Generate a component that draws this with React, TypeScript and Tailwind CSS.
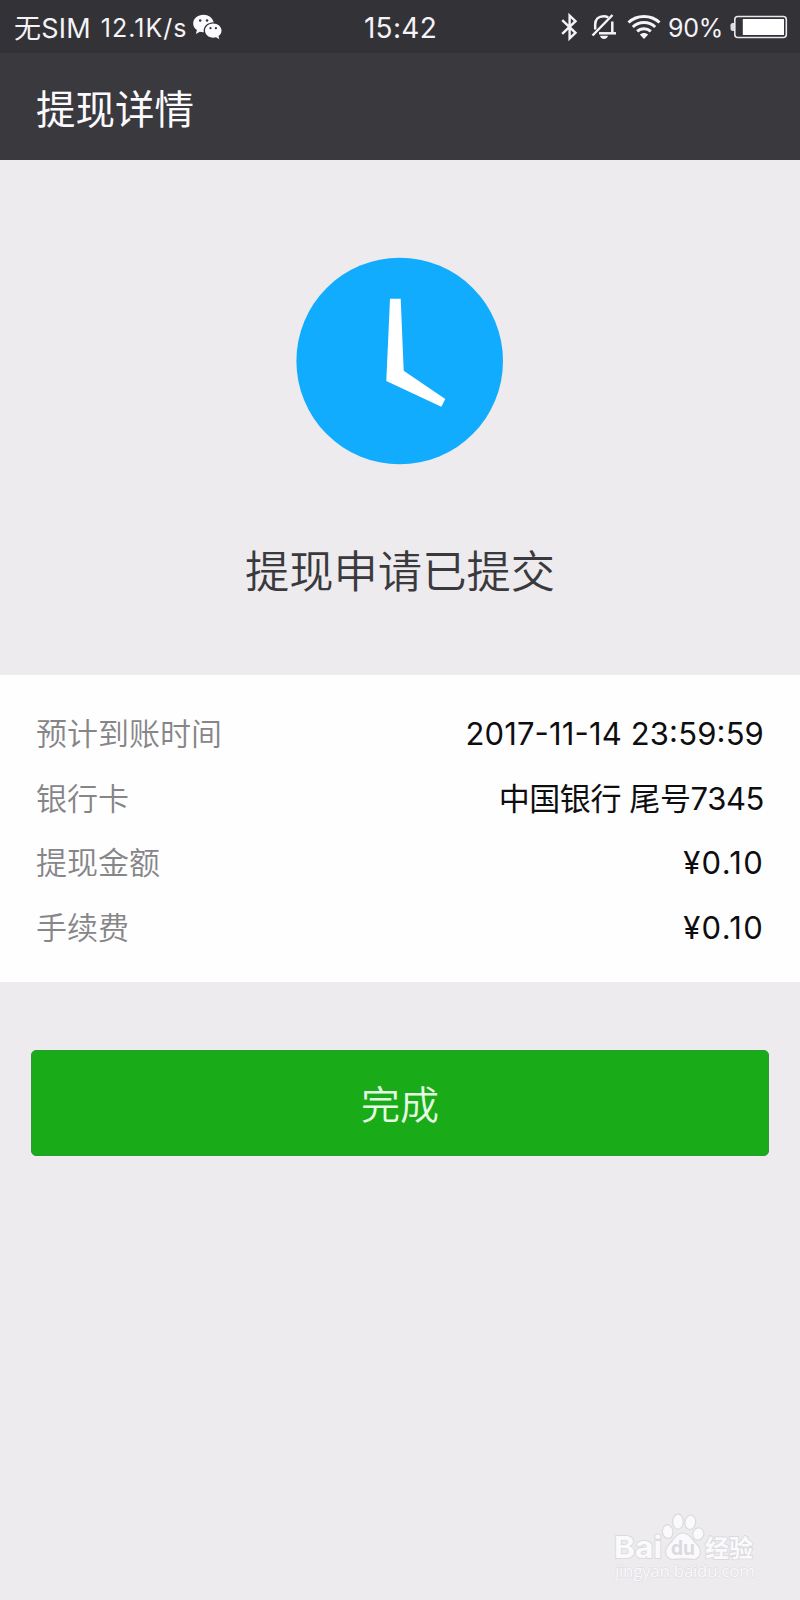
const details = [
  { label: '预计到账时间', value: '2017-11-14 23:59:59', spacing: 'tracking-[0.15px]' },
  { label: '银行卡', value: '中国银行 尾号7345', spacing: 'tracking-[-0.4px]' },
  { label: '提现金额', value: '¥0.10', spacing: 'tracking-[1.3px]' },
  { label: '手续费', value: '¥0.10', spacing: 'tracking-[1.3px]' },
]

function WechatIcon() {
  return (
    <svg className="-mt-[3px]" width="29" height="26" viewBox="0 0 29 26">
      <path
        fill="#fbfaff"
        d="M10.500 0.800C4.700 0.800 0.200 4.600 0.200 9.400c0 2.800 1.400 5 3.700 6.700l-1 3.900 4-2.200c1.200.3 2.400.5 3.900.4-.9-5.200 3-9.700 9.900-9.900C19.600 3.900 15.500 0.800 10.500 0.800z"
      />
      <path
        fill="#fbfaff"
        d="M20.200 9.500c-4.700 0-8.200 3.200-8.200 7.100 0 4 3.500 7.100 8.200 7.100 1 0 2-.1 2.900-.4l3.200 1.900-.8-3.100c1.900-1.300 3-3.200 3-5.500 0-3.900-3.600-7.100-8.300-7.100z"
      />
      <g fill="#333237">
        <circle cx="7.200" cy="6.600" r="1.250" />
        <circle cx="14" cy="6.600" r="1.250" />
        <circle cx="17.500" cy="14.200" r="1.100" />
        <circle cx="22.900" cy="14.200" r="1.100" />
      </g>
    </svg>
  )
}

function BluetoothIcon() {
  return (
    <svg className="-mt-[3px]" width="17" height="30" viewBox="0 0 17 30" fill="none" stroke="#f4f3f8" strokeWidth="2.400">
      <path d="M1.200 8.200L14.500 20.800 8.600 26.400V3.600L14.500 9.200 1.200 21.800" />
    </svg>
  )
}

function BellOffIcon() {
  return (
    <svg className="-mt-[3px]" width="26" height="26" viewBox="0 0 26 26" fill="none" stroke="#f4f3f8" strokeWidth="2.500">
      <path d="M4.200 15.500V10.500C4.200 5.500 7.500 2.200 12.500 2.200c1.800 0 3.400.4 4.700 1.200" />
      <path d="M21.300 7.500V19" />
      <path d="M8 19.300H25" />
      <path d="M21.500 1L1.500 21.500" />
      <path fill="#f4f3f8" stroke="none" d="M9 21.800h8c-.4 2-1.900 3.200-4 3.200S9.400 23.800 9 21.800z" />
    </svg>
  )
}

function WifiIcon() {
  return (
    <svg className="-mt-[3px]" width="34" height="26" viewBox="0 0 34 26" fill="none" stroke="#f4f3f8" strokeWidth="3">
      <path d="M1.500 8.500C10 0.500 24 0.500 32.500 8.500" />
      <path d="M5.800 13c6.200-6 16.200-6 22.400 0" />
      <path d="M10.200 17.400c3.800-3.600 9.800-3.600 13.600 0" />
      <path fill="#f4f3f8" stroke="none" d="M12.800 20.600c2.400-2.100 6-2.100 8.400 0L17 25z" />
    </svg>
  )
}

function BatteryIcon() {
  return (
    <svg className="-mt-[3px]" width="58" height="24" viewBox="0 0 58 24">
      <path fill="#dddce2" d="M4 8v8H2.500C1.300 16 .5 15 .5 13.800v-3.600C.5 9 1.300 8 2.500 8z" />
      <rect x="4.800" y="1.500" width="51.500" height="21" rx="3" fill="none" stroke="#e9e8ed" strokeWidth="1.600" />
      <rect x="12.800" y="4" width="41.200" height="16" rx="0.500" fill="#ffffff" />
    </svg>
  )
}

function StatusBar() {
  return (
    <div className="grid h-[53px] grid-cols-[1fr_auto_1fr] items-center bg-[#333237] text-[#f4f3f8]">
      <div className="flex items-center pl-[14px]">
        <span className="text-[27px] leading-[55px] tracking-[0.200px]">无SIM</span>
        <span className="ml-[10px] text-[25px] leading-[55px] tracking-[1px]">12.1K/s</span>
        <span className="ml-[6px]">
          <WechatIcon />
        </span>
      </div>
      <span className="pl-[1px] text-[28px] leading-[57px] tracking-[0.300px]">15:42</span>
      <div className="flex items-center justify-end pr-[12px]">
        <BluetoothIcon />
        <span className="ml-[13px]">
          <BellOffIcon />
        </span>
        <span className="ml-[10px]">
          <WifiIcon />
        </span>
        <span className="ml-[7px] text-[25px] leading-[55px] tracking-[-0.300px]">90%</span>
        <span className="ml-[7px]">
          <BatteryIcon />
        </span>
      </div>
    </div>
  )
}

function Watermark() {
  return (
    <div className="absolute right-[34px] bottom-[14px] h-[75px] w-[155px]">
      <svg width="155" height="75" viewBox="0 0 155 75" className="overflow-visible">
        <g fill="#faf9fb" stroke="#dbdade" strokeWidth="1.200">
          <ellipse cx="56.700" cy="20.700" rx="5.300" ry="6.800" transform="rotate(-8 56.700 20.700)" />
          <ellipse cx="67" cy="10.700" rx="5.300" ry="7.500" />
          <ellipse cx="79.300" cy="11.300" rx="5.300" ry="7.300" transform="rotate(8 79.300 11.300)" />
          <ellipse cx="87.300" cy="23" rx="5.500" ry="6.200" transform="rotate(15 87.300 23)" />
          <path d="M72 22c-5 0-8 4-10.500 7.500C58.500 33 54.500 36 54.500 41c0 4.500 3.500 7.500 7.500 7.500 3.500 0 6.500-.7 10-.7s6.500.7 10 .7c4 0 7.500-3 7.500-7.500 0-5-4-8-7-11.500C79.500 26 77 22 72 22z" />
        </g>
        <g fill="#faf9fb" stroke="#dbdade" strokeWidth="1.800" paintOrder="stroke" fontFamily="Inter, 'Noto Sans CJK SC', sans-serif">
          <text x="3" y="47" fontSize="30" fontWeight="700" textLength="48" lengthAdjust="spacingAndGlyphs">Bai</text>
          <text x="60" y="44" fontSize="20" fontWeight="700" textLength="24" lengthAdjust="spacingAndGlyphs" fill="#dbdade" stroke="none">du</text>
          <text x="94" y="46" fontSize="24" fontWeight="700" textLength="48" lengthAdjust="spacingAndGlyphs">经验</text>
          <text x="4" y="66" fontSize="17" fontFamily="'Open Sans', sans-serif" textLength="140" lengthAdjust="spacing" strokeWidth="1">jingyan.baidu.com</text>
        </g>
      </svg>
    </div>
  )
}

export default function App() {
  return (
    <div className="relative flex h-[1600px] w-[800px] flex-col overflow-hidden bg-[#edebee] font-[Inter,'Noto_Sans_CJK_SC',sans-serif]">
      <StatusBar />

      <header className="flex h-[107px] items-center bg-[#3a393e] px-[36px] pt-[7px]">
        <h1 className="text-[39.500px] leading-[100px] text-[#fbfaff]">提现详情</h1>
      </header>

      <section className="flex h-[515px] flex-col items-center pt-[97px]">
        <svg width="208" height="208" viewBox="0 0 208 208">
          <circle cx="103.700" cy="104" r="103.300" fill="#12acff" />
          <path fill="#ffffff" d="M94 41.700h10.700l3 72 41.600 28.300-4 7.700-55-25.700z" />
        </svg>
        <p className="mt-[75px] text-[44.300px] leading-[64px] font-[350] text-[#3a393d]">提现申请已提交</p>
      </section>

      <section className="flex h-[307px] flex-col bg-[#fefefe] px-[36px] pt-[27px]">
        {details.map((row) => (
          <div key={row.label} className="flex h-[64.500px] items-center justify-between">
            <span className="text-[31px] font-[350] text-[#868588]">{row.label}</span>
            <span className={`text-[31px] text-[#0e0e10] [font-feature-settings:'case'] ${row.spacing}`}>
              {row.value}
            </span>
          </div>
        ))}
      </section>

      <div className="px-[31px] pt-[68px]">
        <button className="h-[106px] w-full rounded-[5px] border border-[#2a9a35] bg-[#1aab19] pt-[5px] text-[39px] font-[350] text-[#e6fbe4]">
          完成
        </button>
      </div>

      <Watermark />
    </div>
  )
}
